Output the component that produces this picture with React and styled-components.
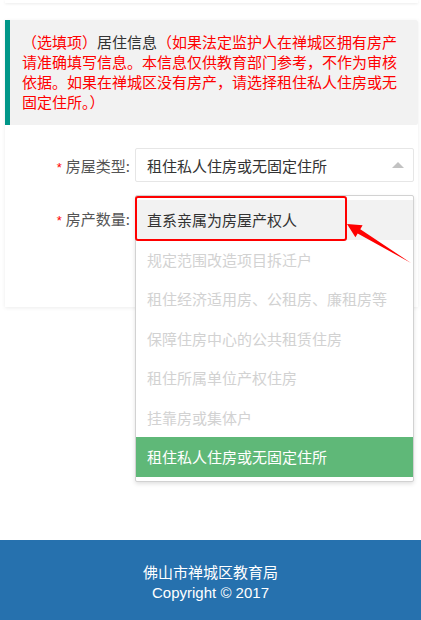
import React from 'react';
import styled, { createGlobalStyle } from 'styled-components';

const GlobalStyle = createGlobalStyle`
  html, body {
    margin: 0;
    padding: 0;
    background: #fff;
  }
  body {
    font-family: "Noto Sans CJK SC", "Noto Sans", sans-serif;
    color: #333;
  }
  * {
    box-sizing: border-box;
  }
`;

const Main = styled.div`
  position: relative;
  height: 540px;
  padding: 0 3px 0 5px;
  overflow: hidden;
`;

const TopCard = styled.div`
  height: 3px;
  background: #fff;
  box-shadow: 0 1px 3px rgba(0, 0, 0, 0.08);
`;

const Card = styled.div`
  margin-top: 17px;
  background: #fff;
  box-shadow: 0 1px 4px rgba(0, 0, 0, 0.08);
  padding-bottom: 72px;
`;

const Quote = styled.div`
  background: #f2f2f2;
  border-left: 5px solid #009688;
  border-radius: 0 2px 2px 0;
  padding: 12px 13px 13px 12px;
  font-size: 15px;
  line-height: 20px;
  color: #f00;
`;

const Dark = styled.span`
  color: #333;
`;

const Form = styled.div`
  padding: 23px 4px 0 0;
  display: flex;
  flex-direction: column;
  gap: 19px;
`;

const Row = styled.div`
  display: grid;
  grid-template-columns: 125px 1fr;
  column-gap: 5px;
  align-items: center;
`;

const Label = styled.label`
  text-align: right;
  font-size: 15px;
  color: #555;
  white-space: nowrap;
`;

const Star = styled.span`
  color: #f00;
  font-size: 13px;
  margin-right: 4px;
  font-family: "Liberation Sans", sans-serif;
`;

const SelectWrap = styled.div`
  position: relative;
`;

const SelectBox = styled.div`
  height: 34px;
  border: 1px solid #e6e6e6;
  border-radius: 2px;
  background: #fff;
  display: flex;
  align-items: center;
  justify-content: space-between;
  padding: 0 9px 0 11px;
  font-size: 15px;
  color: #333;
`;

const Caret = styled.span`
  width: 0;
  height: 0;
  margin-left: auto;
  border-style: solid;
  border-width: ${p => (p.open ? '0 6px 6px' : '6px 6px 0')};
  border-color: ${p => (p.open ? 'transparent transparent #c2c2c2' : '#c2c2c2 transparent transparent')};
`;

const Dropdown = styled.div`
  position: absolute;
  left: 0;
  right: 0;
  top: calc(100% + 13px);
  z-index: 5;
  background: #fff;
  border: 1px solid #d2d2d2;
  border-radius: 2px;
  box-shadow: 0 2px 4px rgba(0, 0, 0, 0.12);
  padding: 4px 0;
`;

const Option = styled.div`
  height: 39.5px;
  line-height: 39.5px;
  padding-left: 11px;
  font-size: 15px;
  white-space: nowrap;
  color: ${p => (p.selected ? '#fff' : p.disabled ? '#d2d2d2' : '#333')};
  background: ${p => (p.selected ? '#5fb878' : p.hover ? '#f2f2f2' : 'transparent')};
`;

const Highlight = styled.div`
  position: absolute;
  left: 135px;
  top: 196px;
  width: 212px;
  height: 45px;
  border: 2.5px solid #f00;
  border-radius: 3px;
  z-index: 6;
`;

const Pointer = styled.svg`
  position: absolute;
  left: 340px;
  top: 210px;
  z-index: 6;
`;

const Footer = styled.footer`
  height: 80px;
  background: #2671ae;
  color: #fff;
  text-align: center;
  padding-top: 23px;
  font-size: 15px;
  line-height: 19.5px;
  font-family: "Liberation Sans", "Noto Sans CJK SC", sans-serif;
`;

const options = [
  { text: '直系亲属为房屋产权人', hover: true },
  { text: '规定范围改造项目拆迁户', disabled: true },
  { text: '租住经济适用房、公租房、廉租房等', disabled: true },
  { text: '保障住房中心的公共租赁住房', disabled: true },
  { text: '租住所属单位产权住房', disabled: true },
  { text: '挂靠房或集体户', disabled: true },
  { text: '租住私人住房或无固定住所', selected: true },
];

export default function App() {
  return (
    <>
      <GlobalStyle />
      <Main>
        <TopCard />
        <Card>
          <Quote>
            （选填项）<Dark>居住信息</Dark>（如果法定监护人在禅城区拥有房产请准确填写信息。本信息仅供教育部门参考，不作为审核依据。如果在禅城区没有房产，请选择租住私人住房或无固定住所。）
          </Quote>
          <Form>
            <Row>
              <Label><Star>*</Star>房屋类型:</Label>
              <SelectWrap>
                <SelectBox>
                  <span>租住私人住房或无固定住所</span>
                  <Caret open />
                </SelectBox>
                <Dropdown>
                  {options.map(o => (
                    <Option key={o.text} hover={o.hover} disabled={o.disabled} selected={o.selected}>
                      {o.text}
                    </Option>
                  ))}
                </Dropdown>
              </SelectWrap>
            </Row>
            <Row>
              <Label><Star>*</Star>房产数量:</Label>
              <SelectWrap>
                <SelectBox>
                  <Caret />
                </SelectBox>
              </SelectWrap>
            </Row>
          </Form>
        </Card>
        <Highlight />
        <Pointer width="80" height="60" viewBox="0 0 80 60">
          <polygon
            points="7,14 22.6,15.3 20.3,19.2 71,53 17.7,23.4 15.4,27.3"
            fill="#f00"
          />
        </Pointer>
      </Main>
      <Footer>
        <div>佛山市禅城区教育局</div>
        <div>Copyright © 2017</div>
      </Footer>
    </>
  );
}
